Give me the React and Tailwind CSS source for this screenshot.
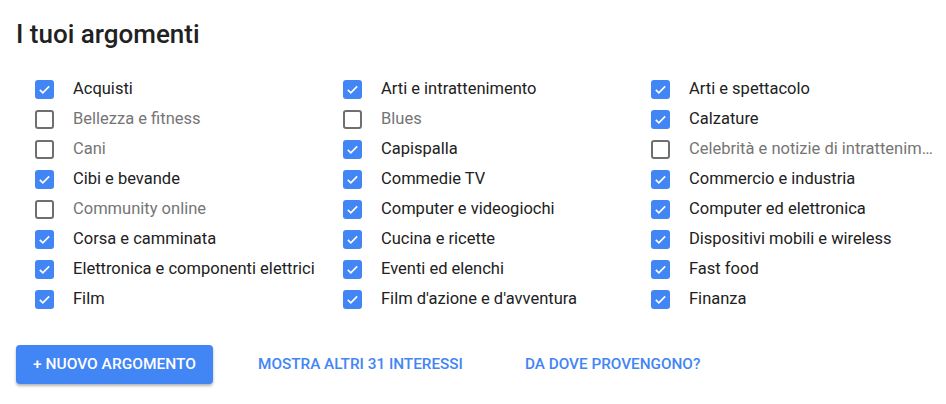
const columns = [
  [
    ["Acquisti", true],
    ["Bellezza e fitness", false],
    ["Cani", false],
    ["Cibi e bevande", true],
    ["Community online", false],
    ["Corsa e camminata", true],
    ["Elettronica e componenti elettrici", true],
    ["Film", true],
  ],
  [
    ["Arti e intrattenimento", true],
    ["Blues", false],
    ["Capispalla", true],
    ["Commedie TV", true],
    ["Computer e videogiochi", true],
    ["Cucina e ricette", true],
    ["Eventi ed elenchi", true],
    ["Film d'azione e d'avventura", true],
  ],
  [
    ["Arti e spettacolo", true],
    ["Calzature", true],
    ["Celebrità e notizie di intrattenimento", false],
    ["Commercio e industria", true],
    ["Computer ed elettronica", true],
    ["Dispositivi mobili e wireless", true],
    ["Fast food", true],
    ["Finanza", true],
  ],
];

function Checkbox({ checked }) {
  if (checked) {
    return (
      <span className="flex h-[19px] w-[19px] shrink-0 items-center justify-center rounded-[3px] bg-[#4285f4]">
        <svg width="15" height="15" viewBox="0 0 24 24" fill="none">
          <path d="M4.5 12.5l4.8 4.8L19.5 7" stroke="white" strokeWidth="2.6" />
        </svg>
      </span>
    );
  }
  return <span className="h-[19px] w-[19px] shrink-0 rounded-[3px] border-2 border-[#6f6f6f]" />;
}

export default function App() {
  return (
    <div className="h-[404px] w-[946px] bg-white pl-4 pr-[6px] pt-[18px] font-['Roboto',sans-serif]">
      <h1 className="text-[26px] font-medium leading-[32px] text-[#212121]">I tuoi argomenti</h1>

      <div className="mt-[24px] grid grid-cols-[308px_308px_1fr] pl-[19px]">
        {columns.map((col, ci) => (
          <div key={ci} className="min-w-0">
            {col.map(([label, checked]) => (
              <div key={label} className="flex h-[30px] items-center gap-[19px]">
                <Checkbox checked={checked} />
                <span className={`truncate text-[16.5px] ${checked ? "text-[#212121]" : "text-[#757575]"}`}>{label}</span>
              </div>
            ))}
          </div>
        ))}
      </div>

      <div className="mt-[31px] flex items-center">
        <button className="h-[39px] w-[197px] rounded-[4px] bg-[#4285f4] text-[15.5px] font-medium uppercase text-white shadow-[0_2px_3px_rgba(0,0,0,0.3)]">
          + Nuovo argomento
        </button>
        <button className="ml-[45px] text-[15.3px] font-medium uppercase text-[#4285f4]">Mostra altri 31 interessi</button>
        <button className="ml-[62px] text-[15.3px] font-medium uppercase text-[#4285f4]">Da dove provengono?</button>
      </div>
    </div>
  );
}
